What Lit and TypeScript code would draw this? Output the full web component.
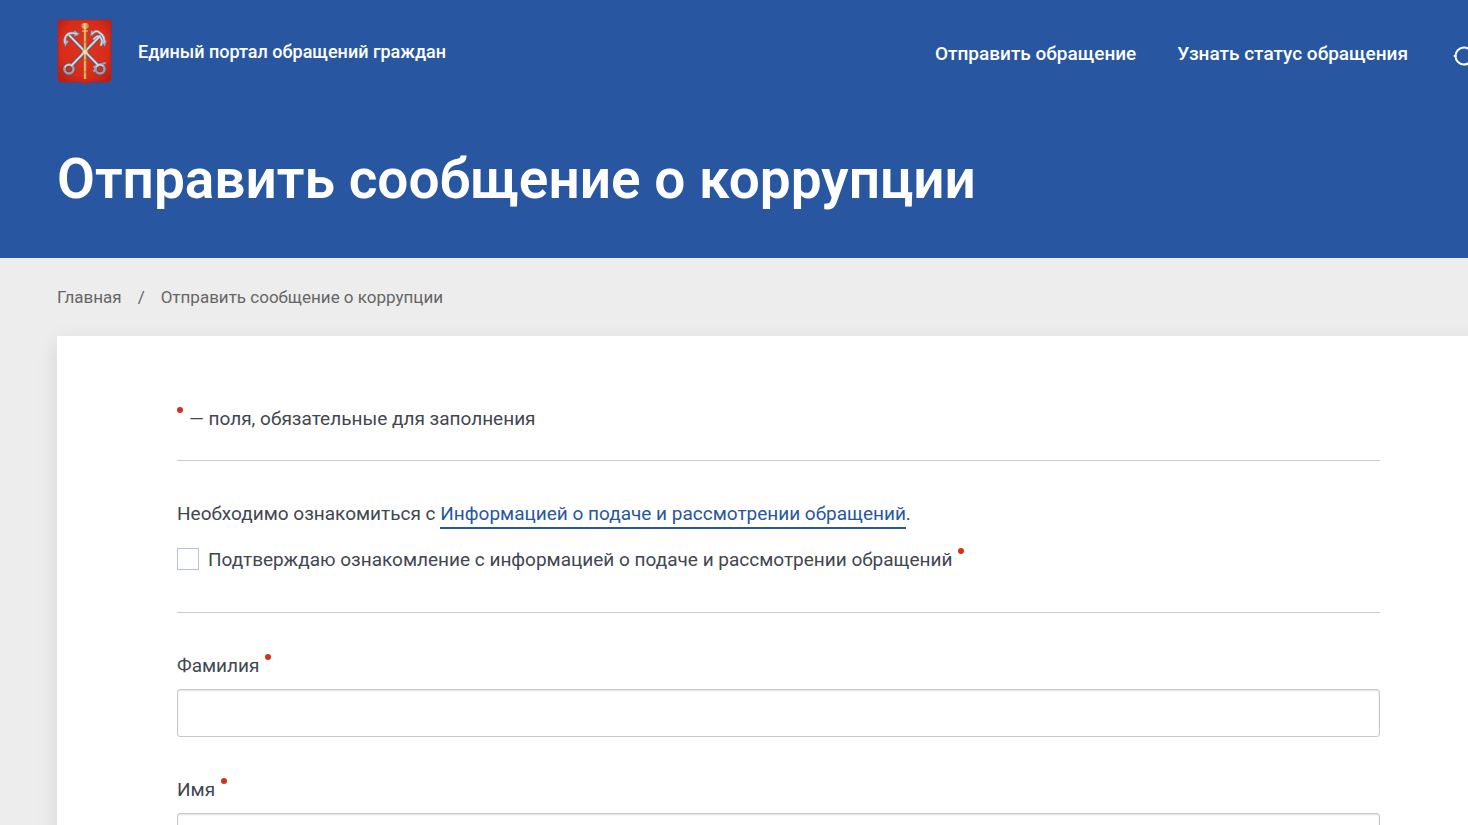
import { LitElement, html, css, svg } from "lit";
import { customElement, property } from "lit/decorators.js";

@customElement("city-emblem")
class CityEmblem extends LitElement {
  static styles = css`
    :host { display: block; }
    .emblem { display: block; width: 56px; height: 68px; }
  `;

  render() {
    const shaft = svg`<path d="M12 16 L41 46" /><path d="M43 17 L15 46" />`;
    const hooks = svg`
      <path d="M8 24 Q7 18 11 15 Q15 13 20 15" />
      <path d="M35 15 Q39 10 43 14 Q48 17 47 24" />
      <path d="M37 20 Q41 15 44 19 Q46 22 44 26" />`;
    const flukes = svg`
      <path d="M6 20 L12 22 L8 28 Z" />
      <path d="M17 11 L23 15 L17 18 Z" />
      <path d="M34 11 L38 14 L33 18 Z" />
      <path d="M44 22 L50 21 L48 28 Z" />`;
    return html`
      <svg class="emblem" viewBox="0 0 56 68" role="img" aria-label="Герб Санкт-Петербурга">
        <defs>
          <radialGradient id="field" cx="50%" cy="42%" r="68%">
            <stop offset="0" stop-color="#e03420" />
            <stop offset="0.65" stop-color="#d72c1a" />
            <stop offset="1" stop-color="#b91c12" />
          </radialGradient>
          <linearGradient id="gold" x1="0" x2="1">
            <stop offset="0" stop-color="#a86a25" />
            <stop offset="0.45" stop-color="#ecd08a" />
            <stop offset="1" stop-color="#b3702a" />
          </linearGradient>
        </defs>
        <path d="M1 2 H54 V61 Q54 64 51 64 H33 Q30 64 28 67 Q26 64 23 64 H4 Q1 64 1 61 Z" fill="url(#field)" stroke="#b3261f" stroke-width="0.8" />
        <g transform="translate(0 1)">
          <g fill="none" stroke="#7a4048" stroke-width="4" stroke-linecap="round" stroke-linejoin="round">
            ${shaft}
            <circle cx="12" cy="50" r="4.500" /><circle cx="43" cy="50" r="4.500" />
          </g>
          <g fill="#a9b4c4" stroke="#6f5866" stroke-width="0.600">${flukes}</g>
          <g fill="none" stroke="#93a0b4" stroke-width="2.600" stroke-linecap="round" stroke-linejoin="round">
            ${shaft}${hooks}
            <circle cx="12" cy="50" r="4.500" /><circle cx="43" cy="50" r="4.500" />
            <path d="M37 48 L48 44 M40 46 L37 52" stroke-width="2" />
          </g>
          <g fill="none" stroke="#dde5ee" stroke-width="1.100" stroke-linecap="round">
            ${shaft}${hooks}
            <path d="M8 48 Q11 44 15 47 M39 48 Q42 44 46 47" />
          </g>
          <path d="M26.500 9 H29.500 V60 H26.500 Z" fill="url(#gold)" />
          <path d="M26 23 h4 M26 41 h4 M26 53 h4" stroke="#a86a25" stroke-width="1" />
          <ellipse cx="28" cy="7" rx="4" ry="3" fill="url(#gold)" />
          <path d="M25 12 h6" stroke="#ecd08a" stroke-width="1" />
          <circle cx="28" cy="33" r="2.500" fill="#ecd9a4" />
        </g>
      </svg>
    `;
  }
}

@customElement("text-field")
class TextField extends LitElement {
  @property() label = "";

  static styles = css`
    :host { display: block; }
    .label { display: flex; align-items: flex-start; gap: 6px; line-height: 24px; }
    .dot { width: 6px; height: 6px; border-radius: 50%; background: #d6301a; }
    .input {
      display: block;
      box-sizing: border-box;
      width: 100%;
      height: 48px;
      margin-top: 11px;
      padding: 0 12px;
      border: 1px solid #c8c8c8;
      border-radius: 3px;
      background: #fff;
      box-shadow: inset 0 1px 2px rgba(0, 0, 0, 0.12);
      font: inherit;
      color: inherit;
    }
  `;

  render() {
    return html`
      <label class="label" for="value">${this.label}<span class="dot"></span></label>
      <input class="input" id="value" type="text" required />
    `;
  }
}

@customElement("app-root")
class AppRoot extends LitElement {
  static styles = css`
    :host {
      display: block;
      height: 100vh;
      overflow: hidden;
      background: #ededed;
      color: #41464f;
      font-family: Roboto, "Open Sans", sans-serif;
      font-size: 19px;
      line-height: 24px;
    }
    .header {
      padding: 18px 0 47px 57px;
      background: #2856a0;
      color: #fff;
    }
    .bar { display: flex; align-items: center; height: 68px; white-space: nowrap; }
    .brand {
      display: flex;
      align-items: center;
      gap: 25px;
      color: inherit;
      text-decoration: none;
      font-size: 18px;
      font-weight: 500;
    }
    .nav { display: flex; align-items: center; gap: 41px; margin-left: auto; padding-top: 4px; font-weight: 500; }
    .nav-link { color: inherit; text-decoration: none; }
    .vision {
      width: 19px;
      height: 24px;
      padding: 0;
      border: 0;
      background: none;
      color: inherit;
      overflow: hidden;
    }
    .vision-icon { display: block; width: 28px; height: 24px; }
    .title { margin: 61px 0 0; font-size: 55px; line-height: 64px; font-weight: 600; }
    .crumbs {
      display: flex;
      gap: 16px;
      padding: 27px 57px;
      color: #666;
      font-size: 17px;
    }
    .crumb { color: inherit; text-decoration: none; }
    .card {
      margin: 0 -32px 0 57px;
      padding: 71px 120px;
      background: #fff;
      box-shadow: 0 6px 20px rgba(0, 0, 0, 0.1);
    }
    .note, .text { margin: 0; }
    .note { display: flex; gap: 6px; }
    .dot { flex: none; width: 6px; height: 6px; border-radius: 50%; background: #d6301a; }
    .rule { margin: 29px 0 41px; border: 0; border-top: 1px solid #ccc; }
    .link { padding-bottom: 2px; color: #2856a0; text-decoration: none; border-bottom: 2px solid #2856a0; }
    .confirm { display: flex; align-items: flex-start; gap: 9px; margin: 22px 0 40px; }
    .check {
      appearance: none;
      flex: none;
      width: 22px;
      height: 22px;
      margin: 0;
      border: 1px solid #b8c2dc;
      background: #fff;
    }
    .check:checked { background: #2856a0; }
    .confirm-label { display: flex; gap: 6px; }
    .fields { display: grid; gap: 41px; }
  `;

  render() {
    return html`
      <header class="header">
        <div class="bar">
          <a class="brand" href="#"><city-emblem></city-emblem>Единый портал обращений граждан</a>
          <nav class="nav">
            <a class="nav-link" href="#send">Отправить обращение</a>
            <a class="nav-link" href="#status">Узнать статус обращения</a>
            <button class="vision" aria-label="Версия для слабовидящих">
              <svg class="vision-icon" viewBox="0 0 28 24" fill="none" stroke="currentColor" stroke-width="2">
                <circle cx="15" cy="14" r="8.500" />
                <path d="M5.500 14 h1" stroke-linecap="round" />
              </svg>
            </button>
          </nav>
        </div>
        <h1 class="title">Отправить сообщение о коррупции</h1>
      </header>
      <nav class="crumbs" aria-label="Навигация">
        <a class="crumb" href="#">Главная</a>
        <span>/</span>
        <span>Отправить сообщение о коррупции</span>
      </nav>
      <main class="card">
        <form>
          <p class="note"><span class="dot"></span>— поля, обязательные для заполнения</p>
          <hr class="rule" />
          <p class="text">Необходимо ознакомиться с <a class="link" href="#info">Информацией о подаче и рассмотрении обращений</a>.</p>
          <div class="confirm">
            <input class="check" id="confirm" type="checkbox" required />
            <label class="confirm-label" for="confirm">Подтверждаю ознакомление с информацией о подаче и рассмотрении обращений<span class="dot"></span></label>
          </div>
          <hr class="rule" />
          <div class="fields">
            <text-field label="Фамилия"></text-field>
            <text-field label="Имя"></text-field>
          </div>
        </form>
      </main>
    `;
  }
}
